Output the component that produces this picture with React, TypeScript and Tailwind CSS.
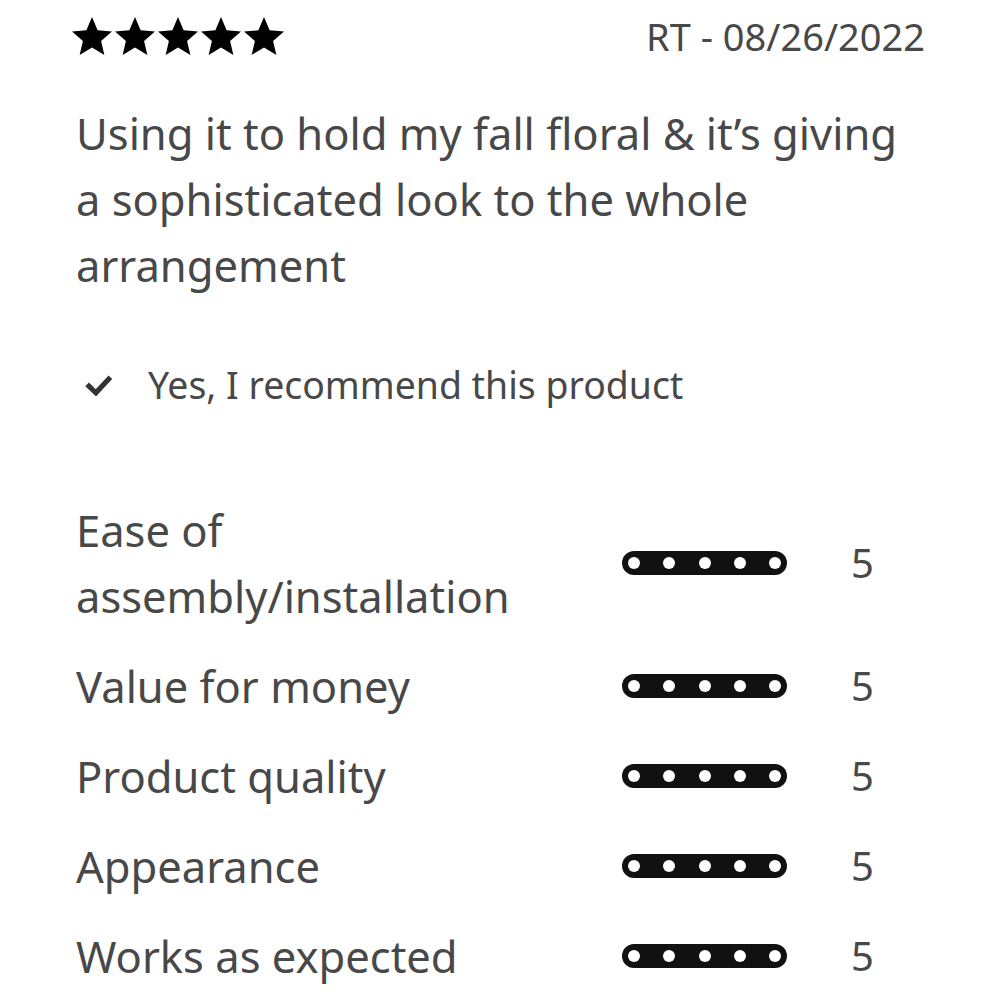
const font = { fontFamily: '"Noto Sans", sans-serif' }

function Star() {
  return (
    <svg viewBox="2 2 20 19" className="w-[40px] h-[38px]" fill="#000">
      <path d="M12 17.27L18.18 21l-1.64-7.03L22 9.24l-7.19-.61L12 2 9.19 8.63 2 9.24l5.46 4.73L5.82 21z" />
    </svg>
  )
}

function Bar() {
  return (
    <div className="w-[165px] h-[24px] rounded-full bg-[#111] flex items-center justify-between px-[6px]">
      {[0, 1, 2, 3, 4].map(i => (
        <span key={i} className="w-[12px] h-[12px] rounded-full bg-white" />
      ))}
    </div>
  )
}

const ratings = [
  { label: 'Ease of assembly/installation', value: 5 },
  { label: 'Value for money', value: 5 },
  { label: 'Product quality', value: 5 },
  { label: 'Appearance', value: 5 },
  { label: 'Works as expected', value: 5 },
]

export default function App() {
  return (
    <div className="min-h-screen bg-white text-[#484848] px-[76px] pt-[8px]" style={font}>
      <div className="h-[56px] flex items-center justify-between">
        <div className="flex gap-[3px] -ml-[4px]">
          {[0, 1, 2, 3, 4].map(i => <Star key={i} />)}
        </div>
        <span className="text-[38px] leading-[54px] -mr-[1px]">RT - 08/26/2022</span>
      </div>

      <p className="mt-[36px] text-[43.5px] leading-[66px] pr-[20px]">
        Using it to hold my fall floral &amp; it’s giving a sophisticated look to the whole arrangement
      </p>

      <div className="mt-[61px] h-[52px] flex items-center">
        <svg viewBox="0 0 26 21" className="w-[27px] h-[22px] ml-[9px]" fill="none" stroke="#333" strokeWidth="5">
          <path d="M2 10l8.5 8L24.5 3" />
        </svg>
        <span className="ml-[36px] text-[37.4px] leading-[52px]">Yes, I recommend this product</span>
      </div>

      <div className="mt-[86px] flex flex-col gap-[24px]">
        {ratings.map(r => (
          <div key={r.label} className="flex items-center">
            <div className="w-[546px] text-[43.5px] leading-[66px]">{r.label}</div>
            <Bar />
            <div className="ml-[64px] text-[40px] leading-[66px]">{r.value}</div>
          </div>
        ))}
      </div>
    </div>
  )
}
